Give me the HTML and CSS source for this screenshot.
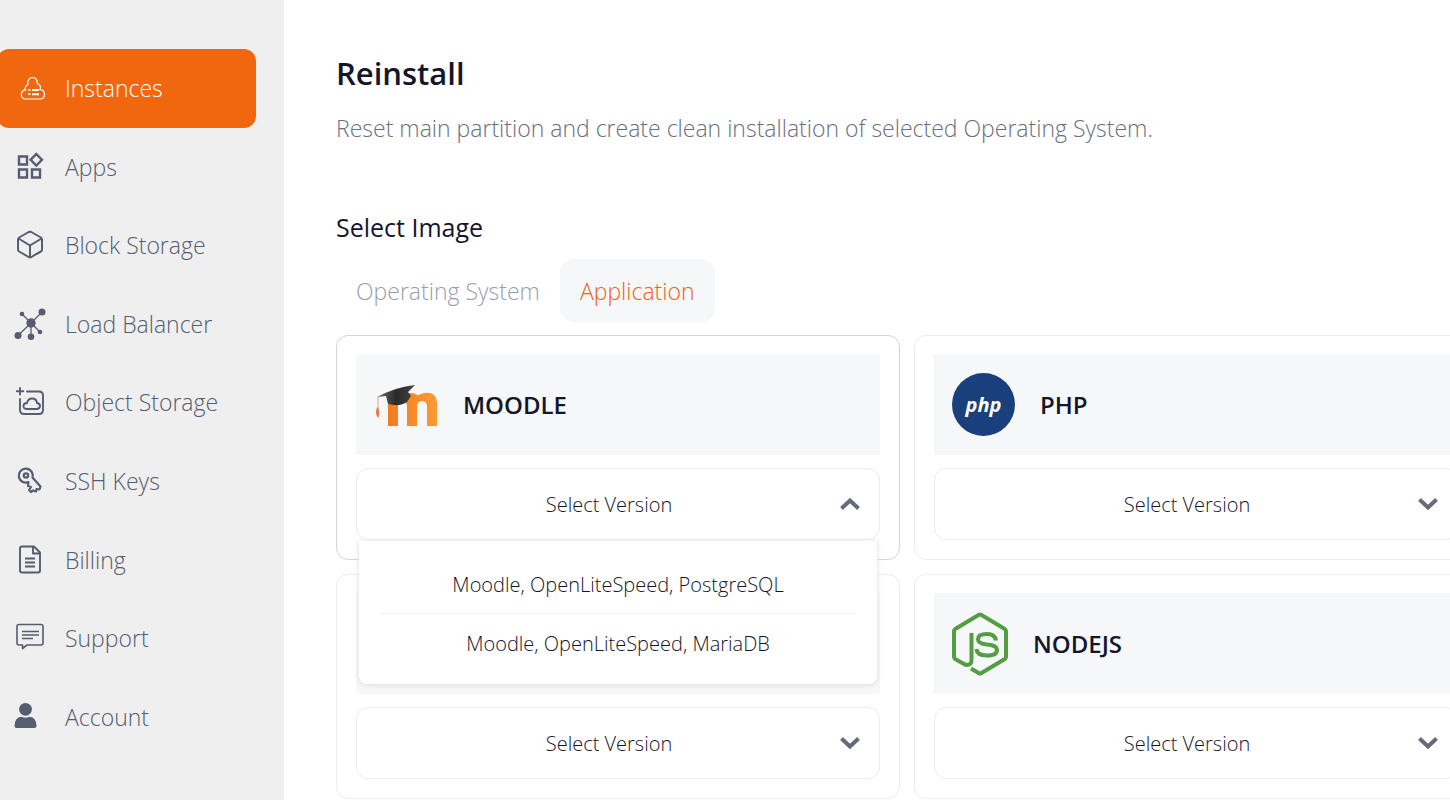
FILE: index.html
```html
<!DOCTYPE html>
<html lang="en">
<head>
<meta charset="utf-8">
<meta name="viewport" content="width=device-width, initial-scale=1">
<title>Reinstall</title>
<link rel="stylesheet" href="styles.css">
</head>
<body>
<div class="app">
  <aside class="sidebar">
    <nav class="nav">
      <a class="nav-item active" href="#" aria-current="page">
        <svg class="nav-icon" viewBox="0 0 34 34" fill="none" stroke="currentColor" stroke-width="1.200"><path d="M11.500 28C6 28 6 19.500 11.500 18.800C10.500 17.500 12 14 14 13.500C13 9.500 15.500 6.500 18.500 6.500C22 6.500 23.500 9.500 23.300 12.500C26.500 13.500 27 17 26 18.500C32 19 32 28 26 28Z"/><path d="M18 19h7M18 23.200h7" stroke-width="2"/><path d="M14 19h2.500M14 23.200h2.500" stroke-width="1.600"/></svg>
        <span>Instances</span></a>
      <a class="nav-item" href="#">
        <svg class="nav-icon" viewBox="0 0 34 34" fill="none" stroke="currentColor" stroke-width="2.400"><path d="M5 6.500h8v8H5zM5 19.500h8v8H5zM18 19.500h8v8h-8zM22.300 4l5.700 5.800-5.700 5.800-5.700-5.800z"/></svg>
        <span>Apps</span></a>
      <a class="nav-item" href="#">
        <svg class="nav-icon" viewBox="0 0 34 34" fill="none" stroke="currentColor" stroke-width="2" stroke-linejoin="round"><path d="M14.700 4q1.300-.700 2.600 0l9.600 5.500q1.100.700 1.100 2v10q0 1.400-1.100 2L17.300 29q-1.300.700-2.600 0L5.100 23.500q-1.100-.600-1.100-2v-10q0-1.300 1.100-2zM4.500 10.500L16 17.500l11.500-7M16 17.500v12"/></svg>
        <span>Block Storage</span></a>
      <a class="nav-item" href="#">
        <svg class="nav-icon" viewBox="0 0 34 34" fill="currentColor" stroke="none"><path d="M8 7l9 9L28 5M17 16L4 28.500M17 16v13.500M17 16l9 9" fill="none" stroke="currentColor" stroke-width="1.300"/><circle cx="17" cy="16" r="4.700"/><circle cx="28" cy="5" r="3.500"/><circle cx="8" cy="7" r="2.300"/><circle cx="4" cy="28.500" r="3.500"/><circle cx="17" cy="29.700" r="3.300"/><circle cx="26" cy="25" r="2.300"/></svg>
        <span>Load Balancer</span></a>
      <a class="nav-item" href="#">
        <svg class="nav-icon" viewBox="0 0 34 34" fill="none" stroke="currentColor" stroke-width="1.900" stroke-linecap="round"><path d="M13 6.500h12q4 0 4 4v14.500q0 4-4 4H10q-4 0-4-4V14M6 3v6.500M2.800 6.200h6.500"/><path d="M12.500 24q-3.500-.500-3-3.500.500-2.500 3.500-2.500 1-4.500 5-4.500 4.500 0 5 4.500 3 .500 3 3t-3 3z"/></svg>
        <span>Object Storage</span></a>
      <a class="nav-item" href="#">
        <svg class="nav-icon" viewBox="0 0 34 34" fill="none" stroke="currentColor" stroke-width="2.200" stroke-linejoin="round"><path d="M14.500 18A7 7 0 1 1 18.500 13.500L26.500 22.500l-1 3-3-.500-.500 2.500-3-1-2 1.500-2-2 2-3-3-1z"/><circle cx="12" cy="11.500" r="2.200"/></svg>
        <span>SSH Keys</span></a>
      <a class="nav-item" href="#">
        <svg class="nav-icon" viewBox="0 0 34 34" fill="none" stroke="currentColor" stroke-width="1.900" stroke-linejoin="round"><path d="M8 3.500h12l6 6v18q0 2-2 2H8q-2 0-2-2v-22q0-2 2-2zM19 3.500v7h7"/><path d="M11 15.500h10M11 19.500h10M11 23.500h10" stroke-width="2"/></svg>
        <span>Billing</span></a>
      <a class="nav-item" href="#">
        <svg class="nav-icon" viewBox="0 0 34 34" fill="none" stroke="currentColor" stroke-width="1.600" stroke-linejoin="round"><path d="M5 3.500h22q2 0 2 2v16.500q0 2-2 2H13l-4.500 3.500V24H5q-2 0-2-2V5.500q0-2 2-2z"/><path d="M8 10.500h17M8 14h17M8 17.500h11"/></svg>
        <span>Support</span></a>
      <a class="nav-item" href="#">
        <svg class="nav-icon" viewBox="0 0 34 34" fill="currentColor"><circle cx="11.500" cy="9.300" r="6.400"/><path d="M.500 26q0-8.500 7-9.200 4 2 8 0 7 .700 7 9.200 0 2-2 2H2.500q-2 0-2-2z"/></svg>
        <span>Account</span></a>
    </nav>
  </aside>
  <main class="main">
    <h1 class="title">Reinstall</h1>
    <p class="subtitle">Reset main partition and create clean installation of selected Operating System.</p>
    <h2 class="section-title">Select Image</h2>
    <div class="tabs" role="tablist">
      <button class="tab" type="button" role="tab" aria-selected="false">Operating System</button>
      <button class="tab selected" type="button" role="tab" aria-selected="true">Application</button>
    </div>
    <div class="cards">
      <section class="card open">
        <header class="card-head">
          <svg class="logo-moodle" viewBox="0 0 64 64" aria-hidden="true">
            <defs>
              <linearGradient id="orange"><stop offset="0" stop-color="#f47b20"/><stop offset="1" stop-color="#fb9a33"/></linearGradient>
              <linearGradient id="cap"><stop offset="0" stop-color="#707070"/><stop offset="0.500" stop-color="#292929"/><stop offset="1" stop-color="#444"/></linearGradient>
            </defs>
            <path d="M14 53V27h11c3-5 7-7 12-7 3 0 5 1 7 2.500C50 19 56 19 60 22q3 3 3 9v22H53V34q0-6-5-6t-5 6v19H33V34q0-6-5-6t-4 6v19z" fill="url(#orange)"/>
            <path d="M3 24Q22 14 41 12L34 19l3 4-4 6q-7 5-19 2l-2-8z" fill="url(#cap)"/>
            <path d="M4 24v17" stroke="#d9a184" stroke-width="1"/><path d="M3 34q3.500 2 1.500 11-4-3-1.500-11z" fill="#ec7548"/>
          </svg>
          <h3 class="card-title">MOODLE</h3>
        </header>
        <div class="field">
          <button class="picker" type="button" aria-expanded="true" aria-controls="moodle-menu">Select Version</button>
          <svg class="chevron" viewBox="0 0 20 12"><path d="M1.500 10.500L10 2.500 18.500 10.500"/></svg>
          <ul class="menu" id="moodle-menu">
            <li class="menu-row"><button class="menu-item" type="button">Moodle, OpenLiteSpeed, PostgreSQL</button></li>
            <li class="menu-row"><button class="menu-item" type="button">Moodle, OpenLiteSpeed, MariaDB</button></li>
          </ul>
        </div>
      </section>
      <section class="card">
        <header class="card-head">
          <span class="logo-php" aria-hidden="true">php</span>
          <h3 class="card-title">PHP</h3>
        </header>
        <div class="field">
          <select class="picker" aria-label="PHP version"><option>Select Version</option></select>
          <svg class="chevron" viewBox="0 0 20 12"><path d="M1.500 1.500L10 9.500 18.500 1.500"/></svg>
        </div>
      </section>
      <section class="card">
        <header class="card-head"></header>
        <div class="field">
          <select class="picker" aria-label="Version"><option>Select Version</option></select>
          <svg class="chevron" viewBox="0 0 20 12"><path d="M1.500 1.500L10 9.500 18.500 1.500"/></svg>
        </div>
      </section>
      <section class="card">
        <header class="card-head">
          <svg class="logo-node" viewBox="0 0 56 64" fill="none" stroke="#539e43" stroke-width="4" stroke-linejoin="round" aria-hidden="true">
            <path d="M19.500 21v27q0 5-4.500 5-1.500 0-3-1L4 47.500Q2 46.500 2 44.500V19.500q0-2 2-3L26.500 3q1.500-1 3 0L52 16.500q2 1 2 3v25q0 2-2 3L29.500 61q-1.500 1-3 0L19 56.500"/>
            <path d="M44 28.500Q43 22 35 22q-9 0-9 5.300 0 4.400 9 5.200 10 .700 10 5.500 0 5.500-10 5.500-10 0-10.500-6.500"/>
          </svg>
          <h3 class="card-title">NODEJS</h3>
        </header>
        <div class="field">
          <select class="picker" aria-label="NodeJS version"><option>Select Version</option></select>
          <svg class="chevron" viewBox="0 0 20 12"><path d="M1.500 1.500L10 9.500 18.500 1.500"/></svg>
        </div>
      </section>
    </div>
  </main>
</div>
</body>
</html>
```

FILE: styles.css
```css
* { box-sizing: border-box; }
body {
  margin: 0;
  overflow: hidden;
  background: #fff;
  color: #14162c;
  font-family: "Open Sans", "Noto Sans", sans-serif;
  font-weight: 300;
}
h1, h2, h3, p, ul { margin: 0; padding: 0; }
button, select { font: inherit; color: inherit; cursor: pointer; }

.app { display: flex; min-height: 100vh; }

.sidebar {
  flex: 0 0 284px;
  padding: 49px 28px 44px 0;
  background: #efefef;
}
.nav {
  display: grid;
  grid-auto-rows: 1fr;
  min-height: 707px;
}
.nav-item {
  display: flex;
  align-items: center;
  gap: 17px;
  padding-left: 14px;
  color: #565d71;
  font-size: 23px;
  text-decoration: none;
}
.nav-item.active {
  margin-left: -3px;
  padding-left: 17px;
  border-radius: 12px;
  background: #f1670f;
  color: #fff;
}
.nav-icon { width: 34px; height: 34px; overflow: visible; }

.main { flex: 1; min-width: 0; padding: 51px 0 0 52px; }
.title {
  font-size: 31px;
  line-height: 44px;
  font-weight: 600;
}
.subtitle {
  margin-top: 17px;
  color: #696f7d;
  font-size: 23px;
  line-height: 32px;
  white-space: nowrap;
}
.section-title {
  margin-top: 66px;
  font-size: 25px;
  line-height: 34px;
  font-weight: 500;
}
.tabs { display: flex; margin-top: 15px; }
.tab {
  height: 63px;
  padding: 0 20px;
  border: 0;
  border-radius: 14px;
  background: transparent;
  color: #989eac;
  font-size: 23px;
}
.tab.selected { background: #f6f7f9; color: #ec6220; }

.cards {
  display: grid;
  grid-template-columns: repeat(2, minmax(564px, 1fr));
  gap: 14px;
  margin-top: 13px;
}
.card {
  padding: 18px 19px 19px;
  border: 1px solid #ededf0;
  border-radius: 12px;
}
.card.open { border-color: #d3d4d8; }
.card-head {
  display: flex;
  align-items: center;
  gap: 25px;
  height: 101px;
  padding-left: 18px;
  background: #f6f7f9;
}
.card-title { font-size: 24px; font-weight: 600; }
.logo-moodle { width: 64px; height: 64px; }
.logo-node { width: 56px; height: 64px; }
.logo-php {
  display: grid;
  place-items: center;
  width: 63px;
  height: 63px;
  border-radius: 50%;
  background: #193f7d;
  color: #fff;
  font-size: 20px;
  font-style: italic;
  font-weight: 700;
}
.field { position: relative; margin-top: 13px; }
.picker {
  display: block;
  width: 100%;
  height: 72px;
  padding: 0 18px 0 0;
  border: 1px solid #ededf0;
  border-radius: 12px;
  background: #fff;
  appearance: none;
  font-size: 20px;
  text-align: center;
  text-align-last: center;
}
.chevron {
  position: absolute;
  top: 30px;
  right: 20px;
  width: 20px;
  height: 12px;
  overflow: visible;
  fill: none;
  stroke: #656b7b;
  stroke-width: 4;
  pointer-events: none;
}
.menu {
  position: absolute;
  z-index: 2;
  top: 73px;
  left: 3px;
  right: 3px;
  padding: 14px 20px 12px;
  border-radius: 0 0 8px 8px;
  background: #fff;
  box-shadow: 0 1px 4px 1px #e4e4e7;
  list-style: none;
}
.menu-row + .menu-row { border-top: 1px solid #f3f3f5; }
.menu-item {
  width: 100%;
  height: 58px;
  padding: 0;
  border: 0;
  background: none;
  font-size: 20px;
}
```
